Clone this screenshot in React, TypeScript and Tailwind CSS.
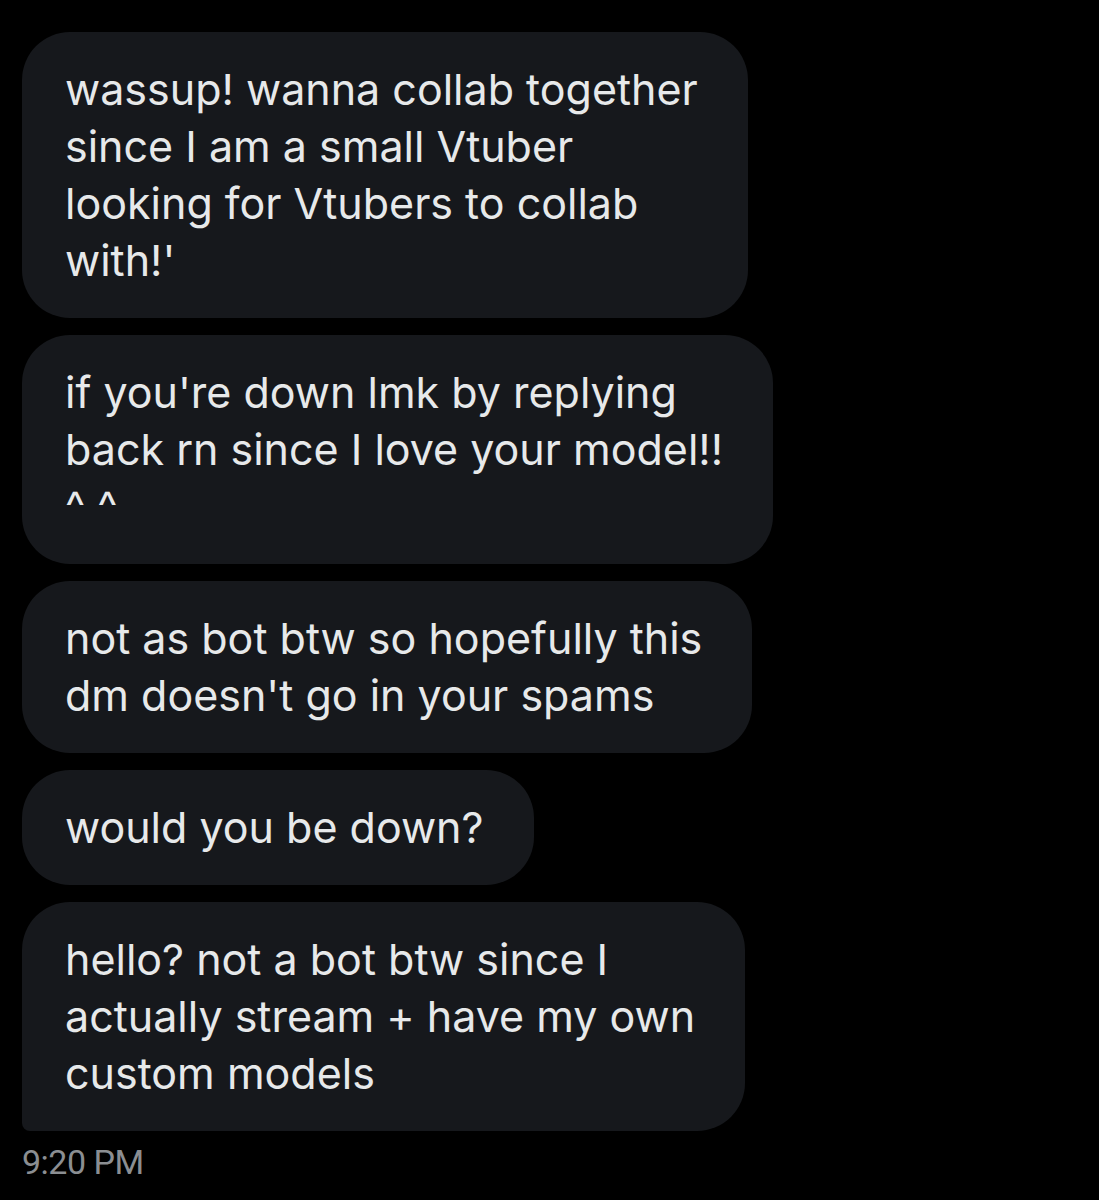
const messages: readonly { lines: string[]; last?: boolean }[] = [
  {
    lines: [
      "wassup! wanna collab together",
      "since I am a small Vtuber",
      "looking for Vtubers to collab",
      "with!'",
    ],
  },
  {
    lines: [
      "if you're down lmk by replying",
      "back rn since I love your model!!",
      "^ ^",
    ],
  },
  {
    lines: ["not as bot btw so hopefully this", "dm doesn't go in your spams"],
  },
  { lines: ["would you be down?"] },
  {
    lines: [
      "hello? not a bot btw since I",
      "actually stream + have my own",
      "custom models",
    ],
    last: true,
  },
];

export default function App() {
  return (
    <div className="min-h-[1200px] w-[1099px] bg-black px-[22px] pt-[32px] font-['Inter',sans-serif]">
      <div className="flex flex-col items-start gap-[17px]">
        {messages.map((m, i) => (
          <div
            key={i}
            className={
              m.last
                ? "w-fit rounded-[48px] rounded-bl-[8px] bg-[#16181c] py-[29px] pl-[43px] pr-[50px] text-[43px] leading-[57px] text-[#e7e9ea]"
                : "w-fit rounded-[48px] bg-[#16181c] py-[29px] pl-[43px] pr-[50px] text-[43px] leading-[57px] text-[#e7e9ea]"
            }
          >
            {m.lines.map((line, j) => (
              <div key={j} className="whitespace-nowrap">
                {line}
              </div>
            ))}
          </div>
        ))}
      </div>
      <div className="mt-[12px] font-['Roboto',sans-serif] text-[34px] leading-[38px] tracking-[-0.5px] text-[#8b8e92]">
        9:20 PM
      </div>
    </div>
  );
}
